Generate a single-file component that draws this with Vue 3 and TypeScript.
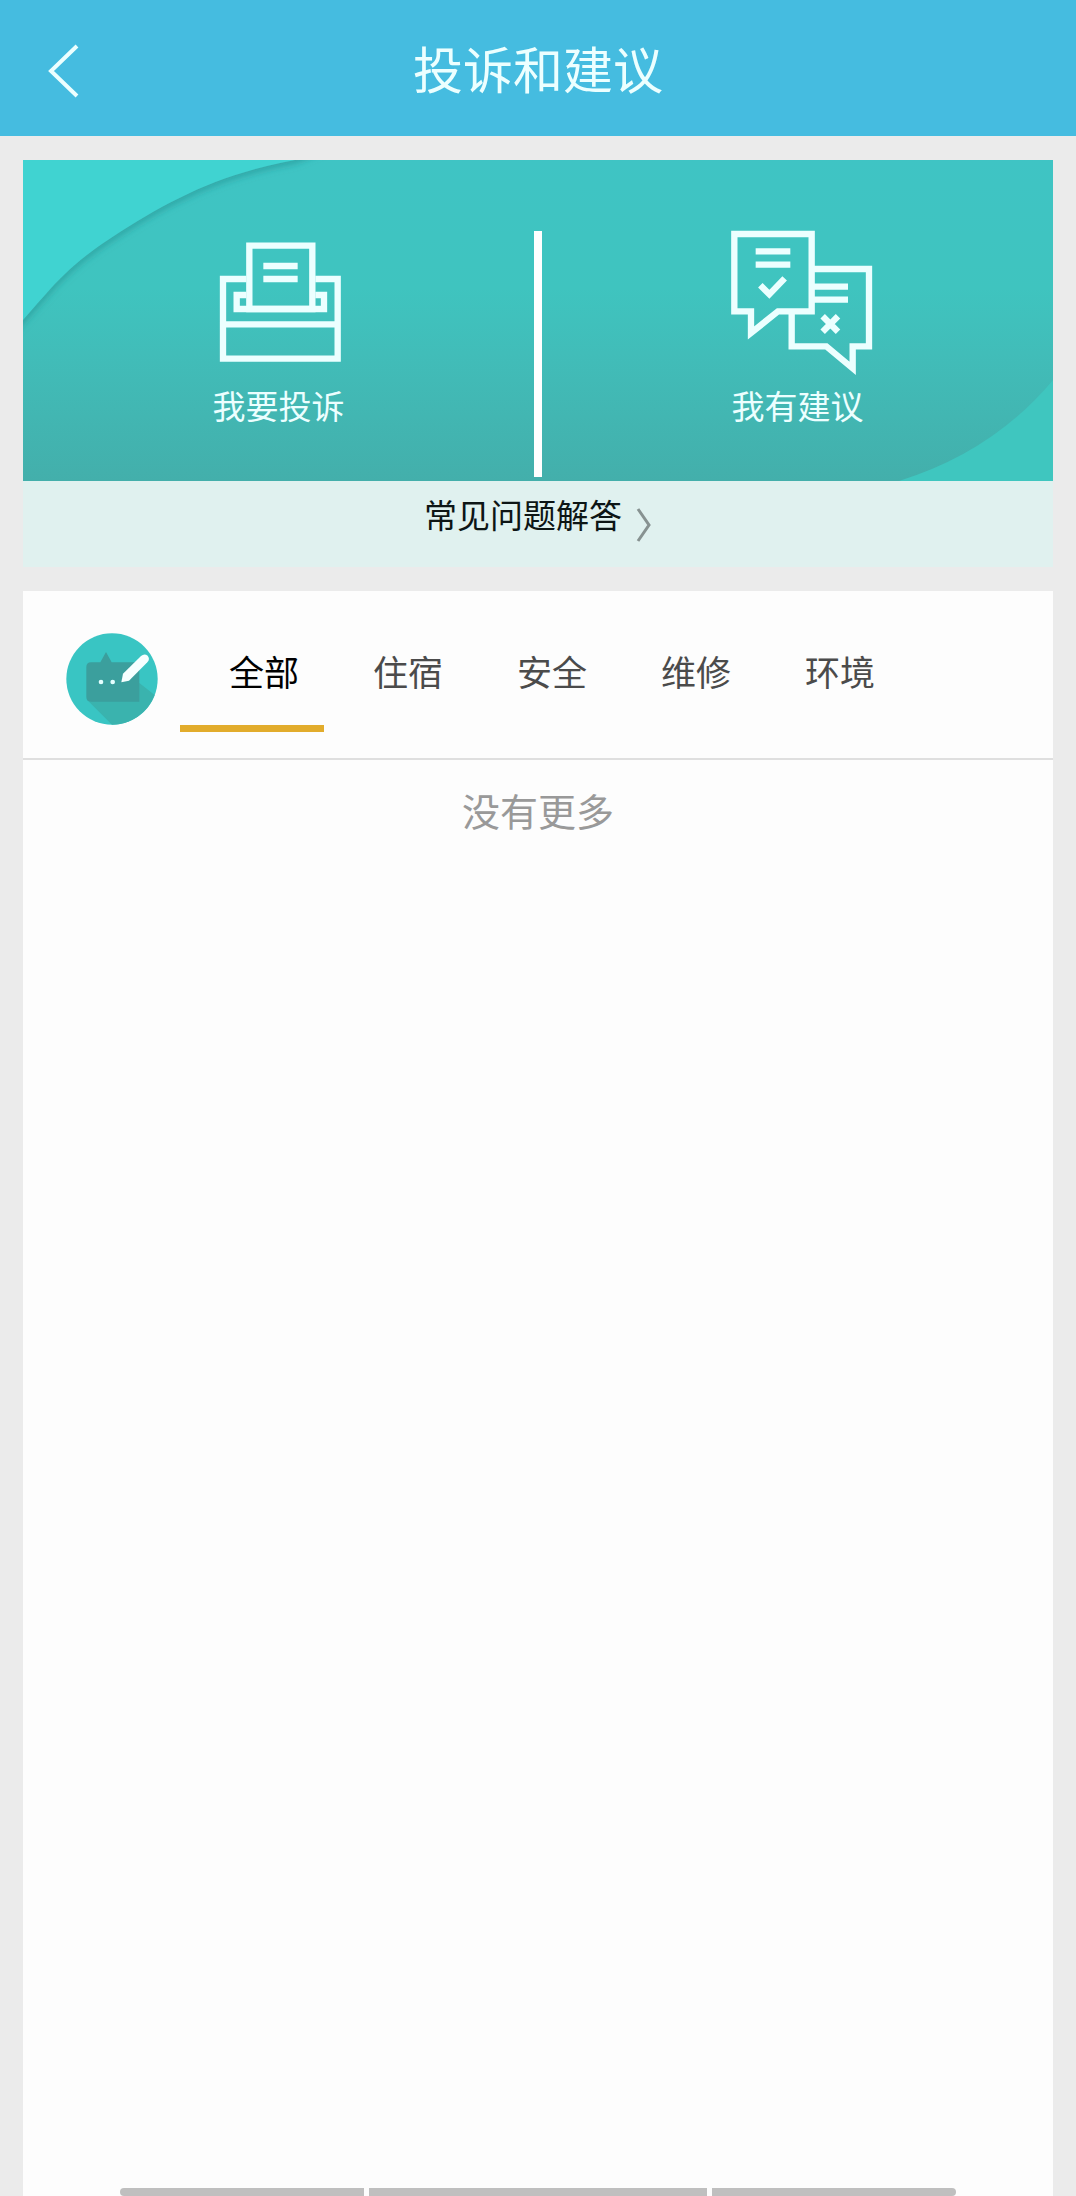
<script setup lang="ts">
import { ref } from 'vue'

const tabs: string[] = ['全部', '住宿', '安全', '维修', '环境']
const active = ref<number>(0)
</script>

<template>
  <div class="page">
    <header class="header">
      <button class="back" aria-label="返回">
        <svg width="34" height="56" viewBox="0 0 34 56" aria-hidden="true">
          <path d="M31 3 5 28 31 53" />
        </svg>
      </button>
      <h1>投诉和建议</h1>
      <span class="spacer"></span>
    </header>

    <section class="banner">
      <svg class="waves" viewBox="0 0 1030 321" preserveAspectRatio="none" aria-hidden="true">
        <defs>
          <filter id="edge" x="-10%" y="-10%" width="120%" height="120%">
            <feDropShadow dx="1" dy="4" stdDeviation="3" flood-color="#1f8f8f" flood-opacity="0.5" />
          </filter>
        </defs>
        <path d="M-20-20H320L272 0C200 13 150 38 97 72S32 124 0 160L-20 182Z" fill="#41d3d1" filter="url(#edge)" />
        <path d="M876 321Q970 292 1030 220V321Z" fill="#3fc6bf" />
      </svg>
      <button class="action">
        <svg width="160" height="144" viewBox="-1 24 480 432" aria-hidden="true">
          <g fill="none" stroke="#ecffff" stroke-width="19">
            <path d="M150 62H339V252H150Z" />
            <path d="M141 162H71V401H415V162H348M71 298H415" />
            <path d="M141 210H112V252H374V210H348" />
            <path d="M192 123H295M192 162H295" />
          </g>
        </svg>
        <span>我要投诉</span>
      </button>
      <span class="divider"></span>
      <button class="action">
        <svg width="160" height="144" viewBox="23 54 480 432" aria-hidden="true">
          <g fill="none" stroke="#ecffff" stroke-width="19">
            <path d="M72 57H304V289H203L122 354V289H72Z" />
            <path d="M304 162H476V394H427V460L348 394H244V289" />
            <path d="M136 109H240M136 149H240M304 215H413M304 254H413" />
            <path d="M150 211 177 238 223 190M337 304 383 350M383 304 337 350" />
          </g>
        </svg>
        <span>我有建议</span>
      </button>
    </section>

    <a class="faq" href="#faq">
      <span>常见问题解答</span>
      <svg width="16" height="36" viewBox="0 0 16 36" aria-hidden="true">
        <path d="M2 2 13 18 2 34" />
      </svg>
    </a>

    <main class="card">
      <nav class="tabs">
        <svg class="badge" width="92" height="92" viewBox="77 70 276 276" aria-hidden="true">
          <circle cx="215" cy="208" r="137" fill="#39c5c3" />
          <path d="M140 270 215 345A137 137 0 0 0 343 256L297 220Z" fill="#3ab3ae" />
          <path d="M152 158H180L197 127 214 158H283Q297 158 297 172V276H152Q138 276 138 262V172Q138 158 152 158Z" fill="#3b9f9d" />
          <circle cx="182" cy="217" r="7" fill="#e4ffff" />
          <circle cx="217" cy="217" r="7" fill="#e4ffff" />
          <path d="M243 218 248 192 302 139Q312 130 322 138 330 148 321 158L266 213Z" fill="#f6ffff" />
        </svg>
        <button
          v-for="(tab, i) in tabs"
          :key="tab"
          class="tab"
          :class="{ on: i === active }"
          @click="active = i"
        >{{ tab }}</button>
      </nav>
      <p class="empty">没有更多</p>
      <div class="bars"><i></i><i class="mid"></i><i></i></div>
    </main>
  </div>
</template>

<style>
body {
  margin: 0;
  background: #ebebeb;
}
</style>

<style scoped>
.page {
  display: flex;
  flex-direction: column;
  min-height: 100vh;
  font-family: "Noto Sans CJK SC", sans-serif;
}
button {
  margin: 0;
  padding: 0;
  border: 0;
  background: none;
  font: inherit;
  cursor: pointer;
}
svg {
  display: block;
  overflow: visible;
}
.header {
  display: flex;
  align-items: center;
  justify-content: space-between;
  height: 136px;
  padding: 0 46px;
  background: #45bce0;
}
.back,
.spacer {
  width: 34px;
}
.back {
  padding-top: 6px;
}
.back path {
  fill: none;
  stroke: #ecffff;
  stroke-width: 4;
}
h1 {
  margin: 0;
  color: #ecffff;
  font-size: 50px;
  font-weight: 400;
  line-height: 72px;
  padding-bottom: 2px;
}
.banner {
  position: relative;
  display: flex;
  height: 321px;
  margin: 24px 23px 0;
  overflow: hidden;
  background: linear-gradient(#3fc4c4 0%, #3fc4bf 40%, #41bdb9 60%, #43afab 100%);
}
.waves {
  position: absolute;
  inset: 0;
  width: 100%;
  height: 100%;
}
.action {
  position: relative;
  display: flex;
  flex: 1;
  flex-direction: column;
  align-items: center;
  padding-top: 73px;
  color: #ecffff;
  font-size: 33px;
  line-height: 48px;
}
.action svg {
  margin-bottom: 4px;
}
.divider {
  position: relative;
  width: 8px;
  height: 246px;
  margin-top: 71px;
  background: #fff;
}
.faq {
  display: flex;
  box-sizing: border-box;
  justify-content: center;
  gap: 14px;
  height: 86px;
  margin: 0 23px 24px;
  padding-top: 9px;
  background: #e0f1ef;
  color: #0d1515;
  font-size: 33px;
  line-height: 48px;
  text-decoration: none;
}
.faq svg {
  margin-top: 17px;
}
.faq path {
  fill: none;
  stroke: #879291;
  stroke-width: 3;
}
.card {
  display: flex;
  flex: 1;
  flex-direction: column;
  margin: 0 23px;
  background: #fdfdfd;
}
.tabs {
  display: flex;
  align-items: flex-start;
  height: 167px;
  padding-left: 43px;
  border-bottom: 2px solid #dfdfdf;
}
.badge {
  flex: none;
  margin: 42px 22px 0 0;
}
.tab {
  box-sizing: border-box;
  width: 144px;
  height: 141px;
  padding: 26px 0 0 24px;
  border-bottom: 7px solid transparent;
  color: #4b4b4b;
  font-size: 35px;
  line-height: 54px;
}
.tab.on {
  border-color: #e2ac2c;
  color: #000;
}
.empty {
  margin: 22px 0 0;
  color: #999;
  font-size: 38px;
  line-height: 56px;
  text-align: center;
}
.bars {
  display: flex;
  gap: 5px;
  margin: auto 97px 0;
}
.bars i {
  flex: 244;
  height: 8px;
  background: #bfbfbf;
}
.bars .mid {
  flex: 338;
}
.bars i:first-child {
  border-radius: 4px 0 0 4px;
}
.bars i:last-child {
  border-radius: 0 4px 4px 0;
}
</style>
